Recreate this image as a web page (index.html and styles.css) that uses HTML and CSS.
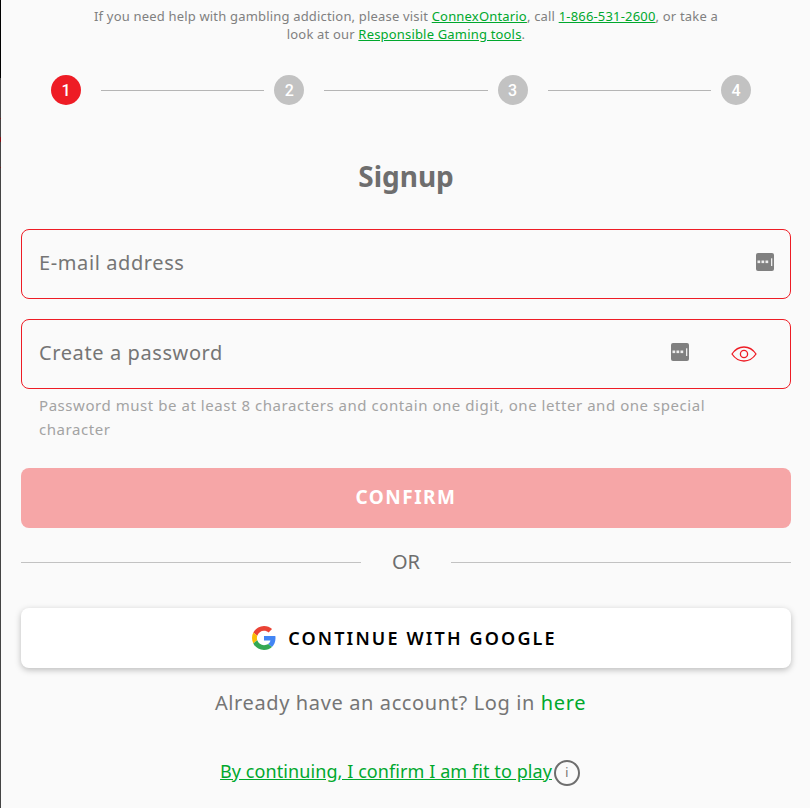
FILE: index.html
```html
<!DOCTYPE html>
<html>
<head>
  <meta charset="UTF-8">
  <title>Signup</title>
  <link rel="stylesheet" href="styles.css">
</head>
<body>

  <div class="backdrop">
    <span class="backdrop-top"></span>
    <span class="backdrop-bottom"></span>
  </div>

  <div class="panel">
    <p class="notice">
      If you need help with gambling addiction, please visit <a href="#">ConnexOntario</a>, call <a href="#">1-866-531-2600</a>, or take a look at our <a href="#">Responsible Gaming tools</a>.
    </p>

    <div class="steps">
      <span class="step active">1</span>
      <span class="step-line"></span>
      <span class="step">2</span>
      <span class="step-line"></span>
      <span class="step">3</span>
      <span class="step-line"></span>
      <span class="step">4</span>
    </div>

    <h1 class="title">Signup</h1>

    <div class="field">
      <span class="placeholder">E-mail address</span>
      <svg class="key-icon" viewBox="0 0 18 18">
        <rect width="18" height="18" rx="2" fill="#808080"/>
        <rect x="1.500" y="7.500" width="2.700" height="2.600" fill="#eee"/>
        <rect x="5.500" y="7.500" width="2.700" height="2.600" fill="#eee"/>
        <rect x="9.500" y="7.500" width="2.700" height="2.600" fill="#eee"/>
        <rect x="15" y="5.300" width="1.300" height="7.700" fill="#eee"/>
      </svg>
    </div>

    <div class="field password">
      <span class="placeholder">Create a password</span>
      <svg class="key-icon" viewBox="0 0 18 18">
        <rect width="18" height="18" rx="2" fill="#808080"/>
        <rect x="1.500" y="7.500" width="2.700" height="2.600" fill="#eee"/>
        <rect x="5.500" y="7.500" width="2.700" height="2.600" fill="#eee"/>
        <rect x="9.500" y="7.500" width="2.700" height="2.600" fill="#eee"/>
        <rect x="15" y="5.300" width="1.300" height="7.700" fill="#eee"/>
      </svg>
      <svg class="eye-icon" viewBox="0 0 26 16" fill="none" stroke="#ee1c25" stroke-width="1.3">
        <path d="M1 8C4 3.5 8 1 13 1s9 2.500 12 7c-3 4.500-7 7-12 7S4 12.500 1 8z"/>
        <circle cx="13" cy="8" r="3.600"/>
      </svg>
    </div>

    <p class="hint">Password must be at least 8 characters and contain one digit, one letter and one special character</p>

    <button class="confirm">CONFIRM</button>

    <div class="divider">
      <span class="divider-line"></span>
      <span class="divider-text">OR</span>
      <span class="divider-line"></span>
    </div>

    <button class="google">
      <svg class="google-icon" viewBox="0 0 48 48">
        <path fill="#ea4335" d="M24 9.500c3.500 0 6.700 1.200 9.200 3.600l6.900-6.900C35.900 2.400 30.500 0 24 0 14.600 0 6.500 5.400 2.600 13.200l8 6.200C12.500 13.700 17.800 9.500 24 9.500z"/>
        <path fill="#4285f4" d="M47 24.500c0-1.600-.1-3.100-.4-4.500H24v9h12.900c-.6 3-2.200 5.400-4.700 7.100l7.700 6C44.400 37.900 47 31.800 47 24.500z"/>
        <path fill="#fbbc05" d="M10.600 28.600c-.5-1.400-.8-3-.8-4.600s.3-3.200.8-4.600l-8-6.200C.9 16.500 0 20.100 0 24s.9 7.500 2.600 10.800l8-6.200z"/>
        <path fill="#34a853" d="M24 48c6.500 0 11.900-2.100 15.900-5.800l-7.700-6c-2.200 1.400-4.900 2.300-8.200 2.300-6.200 0-11.500-4.200-13.400-9.900l-8 6.200C6.500 42.600 14.600 48 24 48z"/>
      </svg>
      <span>CONTINUE WITH GOOGLE</span>
    </button>

    <p class="login">Already have an account? Log in <a href="#">here</a></p>

    <div class="fit">
      <a href="#">By continuing, I confirm I am fit to play</a>
      <span class="info">i</span>
    </div>
  </div>

</body>
</html>
```

FILE: styles.css
```css
*, *:before, *:after {
  box-sizing: border-box;
}

body {
  margin: 0;
  height: 808px;
  overflow: hidden;
  display: flex;
  background-color: #fafafa;
  font-family: "Noto Sans", sans-serif;
  color: #6e6e6e;
}

a {
  color: #00a82d;
}

.backdrop {
  width: 1px;
  flex-shrink: 0;
  display: flex;
  flex-direction: column;
}
.backdrop-top {
  height: 78px;
  background-color: #000;
}
.backdrop-bottom {
  flex: 1;
  background: linear-gradient(#444 40px, #7a1a1e 40px, #7a1a1e 41px, #444 41px, #444 59px, #8a1015 59px, #8a1015 64px, #444 64px, #444 89px, #7a1a1e 89px, #7a1a1e 90px, #444 90px);
}

.panel {
  flex: 1;
  padding: 7px 19px 0 20px;
}

.notice {
  margin: 0 auto;
  width: 636px;
  font-size: 13px;
  line-height: 18px;
  letter-spacing: 0.18px;
  text-align: center;
  color: #808080;
}

.steps {
  display: flex;
  align-items: center;
  gap: 20px;
  margin-top: 32px;
  padding: 0 40px 0 30px;
}
.step {
  width: 30px;
  height: 30px;
  flex-shrink: 0;
  border-radius: 50%;
  display: flex;
  align-items: center;
  justify-content: center;
  background-color: #c2c2c2;
  color: #fff;
  font-family: Roboto, sans-serif;
  font-size: 16px;
  font-weight: 500;
}
.step.active {
  background-color: #ee1c25;
}
.step-line {
  flex: 1;
  height: 1px;
  background-color: #b5b5b5;
  margin-right: -10px;
}

.title {
  margin: 52px 0 0;
  font-size: 28px;
  line-height: 38px;
  font-weight: 700;
  text-align: center;
}

.field {
  height: 70px;
  margin-top: 34px;
  padding: 0 16px 0 17px;
  display: flex;
  align-items: center;
  border: 1px solid #ee1c25;
  border-radius: 8px;
}
.field.password {
  margin-top: 20px;
}
.placeholder {
  flex: 1;
  padding-bottom: 4px;
  font-size: 20px;
  letter-spacing: 0.6px;
  color: #757575;
}
.key-icon {
  width: 18px;
  height: 18px;
  margin-top: -4px;
}
.eye-icon {
  width: 26px;
  height: 16px;
  margin-left: 42px;
  margin-right: 17px;
}

.hint {
  margin: 4px 0 0;
  padding: 0 70px 0 18px;
  font-size: 15px;
  line-height: 24px;
  letter-spacing: 0.55px;
  color: #a3a3a3;
}

.confirm {
  display: block;
  width: 100%;
  height: 60px;
  margin-top: 27px;
  padding-bottom: 3px;
  border: 0;
  border-radius: 8px;
  background-color: #f6a6a7;
  color: #fff;
  font-family: inherit;
  font-size: 19px;
  font-weight: 700;
  letter-spacing: 1.5px;
}

.divider {
  display: flex;
  align-items: center;
  gap: 31px;
  margin-top: 19px;
}
.divider-line {
  flex: 1;
  height: 1px;
  background-color: #c2c2c2;
}
.divider-text {
  font-size: 20px;
  line-height: 30px;
}

.google {
  width: 100%;
  height: 60px;
  margin-top: 31px;
  padding: 0 6px 0 3px;
  display: flex;
  align-items: center;
  justify-content: center;
  gap: 12px;
  border: 0;
  border-radius: 8px;
  background-color: #fff;
  box-shadow: 0 2px 6px rgba(0,0,0,0.25);
  color: #000;
  font-family: inherit;
  font-size: 18px;
  font-weight: 600;
  letter-spacing: 2.15px;
}
.google-icon {
  width: 24px;
  height: 24px;
}

.login {
  margin: 20px 0 0;
  padding-right: 11px;
  font-size: 20px;
  line-height: 30px;
  letter-spacing: 0.62px;
  text-align: center;
  color: #757575;
}
.login a {
  text-decoration: none;
}

.fit {
  margin-top: 38px;
  padding-right: 12px;
  display: flex;
  justify-content: center;
  align-items: center;
  font-size: 18px;
  line-height: 30px;
  letter-spacing: 0.08px;
}
.info {
  width: 26px;
  height: 26px;
  margin-left: 2px;
  margin-top: 3px;
  border: 2px solid #6e6e6e;
  border-radius: 50%;
  display: flex;
  align-items: center;
  justify-content: center;
  font-size: 12px;
  line-height: 1;
}
```
